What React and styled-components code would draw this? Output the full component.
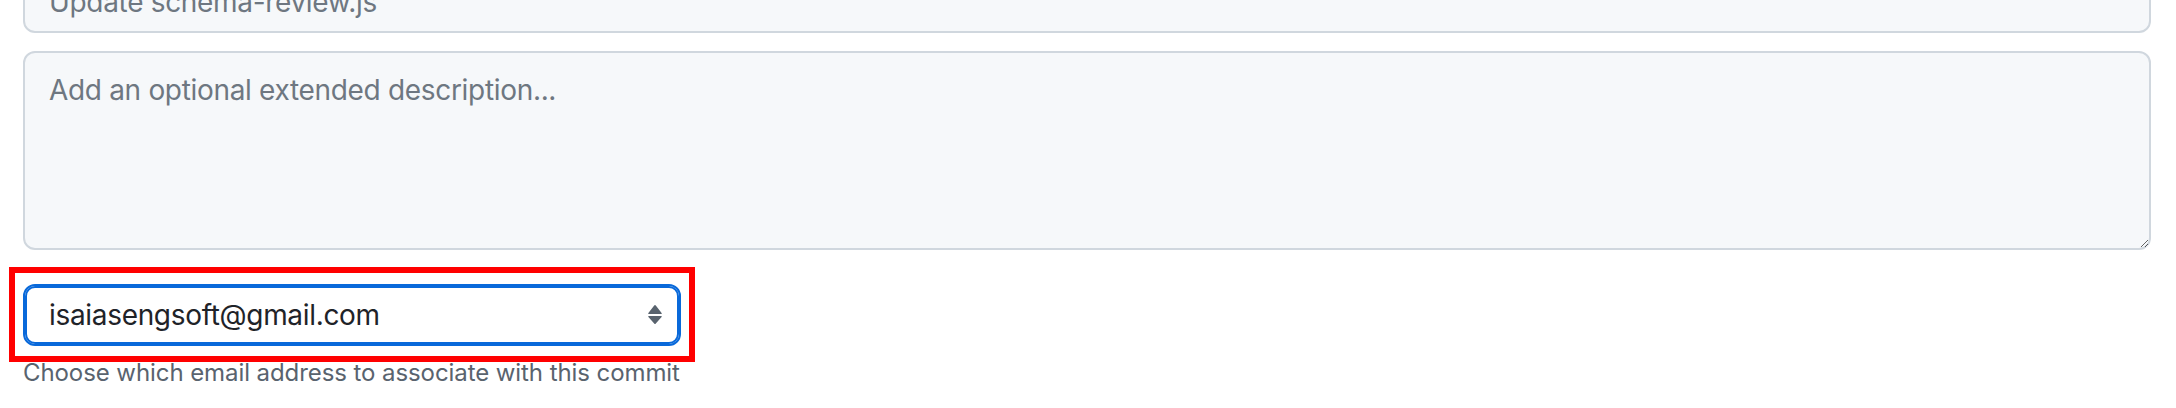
import React from "react";
import styled, { createGlobalStyle } from "styled-components";

const GlobalStyle = createGlobalStyle`
  html, body {
    margin: 0;
    padding: 0;
    background: #ffffff;
    overflow: hidden;
  }
  body {
    font-family: Inter, "Liberation Sans", Arial, sans-serif;
    -webkit-font-smoothing: antialiased;
  }
`;

const Page = styled.div`
  display: flex;
  flex-direction: column;
  padding: 0 25px 0 23px;
  margin-top: -29px;
`;

const fieldBase = `
  box-sizing: border-box;
  width: 100%;
  border: 2px solid #d0d7de;
  border-radius: 12px;
  background: #f6f8fa;
  color: #1f2328;
  font-family: Inter, "Liberation Sans", Arial, sans-serif;
  font-size: 28px;
  letter-spacing: -0.32px;
  outline: none;
  &::placeholder {
    color: #6e7781;
    opacity: 1;
  }
`;

const TitleInput = styled.input`
  ${fieldBase}
  height: 62px;
  padding: 0 24px;
`;

const Description = styled.textarea`
  ${fieldBase}
  display: block;
  margin-top: 18px;
  height: 199px;
  padding: 17px 24px 14px;
  line-height: 40px;
  resize: vertical;
`;

const EmailSection = styled.div`
  display: flex;
  flex-direction: column;
  align-items: flex-start;
  margin-top: 34px;
`;

const Highlight = styled.div`
  position: relative;
  width: 658px;
  &::after {
    content: "";
    position: absolute;
    top: -17px;
    right: -14px;
    bottom: -16px;
    left: -14px;
    border: 6px solid #ff0000;
    pointer-events: none;
  }
`;

const Select = styled.select`
  appearance: none;
  -webkit-appearance: none;
  box-sizing: border-box;
  display: block;
  width: 100%;
  height: 62px;
  padding: 0 56px 0 24px;
  border: 2px solid #0969da;
  box-shadow: inset 0 0 0 2px #0969da;
  border-radius: 12px;
  background: #ffffff;
  color: #1f2328;
  font-family: Inter, "Liberation Sans", Arial, sans-serif;
  font-size: 28px;
  letter-spacing: -0.32px;
  outline: none;
`;

const Arrow = styled.svg`
  position: absolute;
  top: 21px;
  right: 19px;
  width: 14px;
  height: 19px;
  pointer-events: none;
`;

const Hint = styled.p`
  margin: 9px 0 0;
  font-size: 24px;
  line-height: 36px;
  letter-spacing: -0.08px;
  color: #59636e;
`;

export default function App() {
  return (
    <>
      <GlobalStyle />
      <Page>
        <TitleInput placeholder="Update schema-review.js" />
        <Description placeholder="Add an optional extended description..." />
        <EmailSection>
          <Highlight>
            <Select defaultValue="isaiasengsoft@gmail.com">
              <option value="isaiasengsoft@gmail.com">isaiasengsoft@gmail.com</option>
            </Select>
            <Arrow viewBox="0 0 14 19" aria-hidden="true">
              <path d="M6.2 0.6 a1 1 0 0 1 1.6 0 L13.6 8 a0.6 0.6 0 0 1 -0.5 1 H0.9 a0.6 0.6 0 0 1 -0.5 -1 Z" fill="#59636e" />
              <path d="M0.9 11 H13.1 a0.6 0.6 0 0 1 0.5 1 L7.8 18.4 a1 1 0 0 1 -1.6 0 L0.4 12 a0.6 0.6 0 0 1 0.5 -1 Z" fill="#59636e" />
            </Arrow>
          </Highlight>
          <Hint>Choose which email address to associate with this commit</Hint>
        </EmailSection>
      </Page>
    </>
  );
}
